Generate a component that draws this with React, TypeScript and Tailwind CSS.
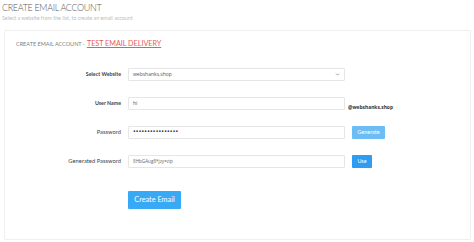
import { ChevronDown } from 'lucide-react'

const rows = [
    { label: 'Select Website', value: 'webshanks.shop', kind: 'select' },
    { label: 'User Name', value: 'hi', kind: 'user' },
    { label: 'Password', value: '••••••••••••••••', kind: 'password' },
    { label: 'Generated Password', value: '8HbGAug8*jzy=zip', kind: 'generated' },
]

export default function App() {
    return (
        <div className="w-[474px] h-[242px] bg-white overflow-hidden font-['Lato',sans-serif]">
            {/* Page heading */}
            <div className="pl-[2px] pt-[2px]">
                <h1 className="text-[9px] leading-[12px] font-light text-[#5a5a5a] tracking-[-0.35px]">
                    CREATE EMAIL ACCOUNT
                </h1>
                <p className="text-[5.3px] leading-[7px] mt-[1px] text-[#bdbdbd]">
                    Select a website from the list, to create an email account
                </p>
            </div>

            {/* Panel */}
            <div className="mt-[8px] ml-[4px] mr-[3px] h-[210px] border border-[#efefef] rounded-[1px]">
                <div className="pl-[11px] pt-[8px] flex items-end gap-[2px]">
                    <span className="text-[5.5px] leading-[9px] text-[#808080]">CREATE EMAIL ACCOUNT -</span>
                    <span className="text-[7.2px] leading-[10px] text-[#e45b59] underline decoration-[#e45b59]">
                        TEST EMAIL DELIVERY
                    </span>
                </div>

                <div className="mt-[19px] flex flex-col gap-[16px]">
                    {rows.map((r) => (
                        <div key={r.label} className="flex items-center h-[13px]">
                            <div
                                className={`w-[123px] text-right pr-[7px] text-[#444] ${
                                    r.kind === 'select' || r.kind === 'user'
                                        ? 'font-bold text-[5.3px]'
                                        : 'text-[5.8px]'
                                }`}
                            >
                                {r.label}
                            </div>
                            <div className="w-[217px] h-[13px] border border-[#e6e6e6] rounded-[1px] flex items-center justify-between px-[4px] text-[#555] font-['Open_Sans',sans-serif]">
                                <span
                                    className={
                                        r.kind === 'password'
                                            ? 'text-[7px] tracking-[0.2px] text-[#333]'
                                            : r.kind === 'generated'
                                              ? 'text-[4.6px] text-[#666]'
                                              : 'text-[5px]'
                                    }
                                >
                                    {r.value}
                                </span>
                                {r.kind === 'select' && (
                                    <ChevronDown className="w-[5px] h-[5px] text-[#555]" strokeWidth={2.5} />
                                )}
                            </div>
                            {r.kind === 'user' && (
                                <span className="ml-[3px] mt-[8px] text-[4.9px] font-bold text-[#333] font-['Open_Sans',sans-serif]">
                                    @webshanks.shop
                                </span>
                            )}
                            {r.kind === 'password' && (
                                <button className="ml-[7px] h-[13px] w-[33px] bg-[#6cbdf3] text-white text-[5.5px] rounded-[1px]">
                                    Generate
                                </button>
                            )}
                            {r.kind === 'generated' && (
                                <button className="ml-[7px] h-[13px] w-[20px] bg-[#2e9cf0] text-white text-[5.5px] rounded-[1px]">
                                    Use
                                </button>
                            )}
                        </div>
                    ))}
                </div>

                <div className="mt-[16px] pl-[123px]">
                    <button className="h-[18px] w-[53px] bg-[#38a9f5] text-white text-[7.3px] rounded-[1px]">
                        Create Email
                    </button>
                </div>
            </div>
        </div>
    )
}
